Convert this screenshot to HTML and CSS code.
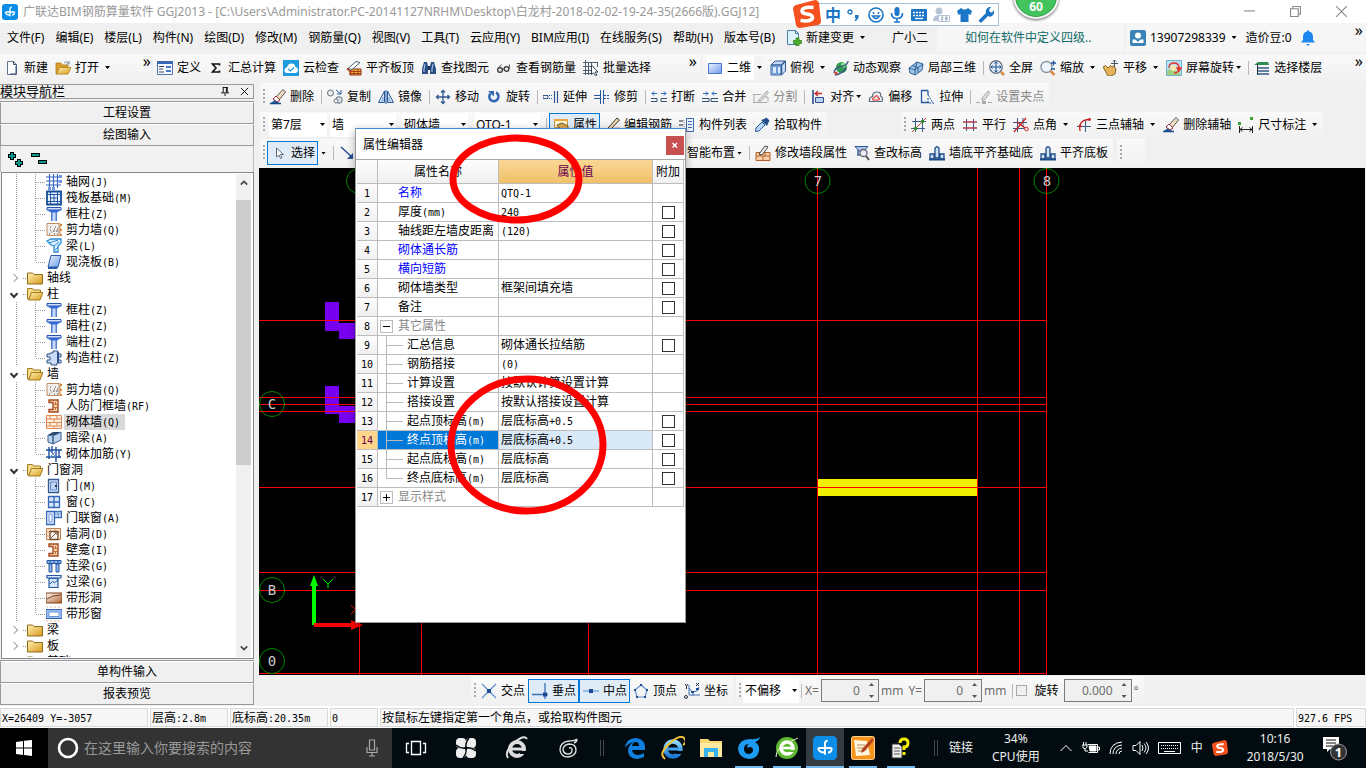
FILE: index.html
```html
<!DOCTYPE html>
<html lang="zh-CN">
<head>
<meta charset="utf-8">
<title>广联达BIM钢筋算量软件 GGJ2013</title>
<link rel="stylesheet" href="styles.css">
</head>
<body>
<svg class="defs" aria-hidden="true">
<defs>
<linearGradient id="g-fold" x1="0" y1="0" x2="1" y2="1"><stop offset="0" stop-color="#fff3b0"/><stop offset="1" stop-color="#d99a1c"/></linearGradient>
<linearGradient id="g-blue" x1="0" y1="0" x2="1" y2="1"><stop offset="0" stop-color="#eaf2ff"/><stop offset="1" stop-color="#6f9be8"/></linearGradient>
<linearGradient id="g-col" x1="0" y1="0" x2="1" y2="0"><stop offset="0" stop-color="#2f62cc"/><stop offset=".5" stop-color="#e6f0ff"/><stop offset="1" stop-color="#3468d0"/></linearGradient>
<linearGradient id="g-brown" x1="0" y1="0" x2="1" y2="1"><stop offset="0" stop-color="#fff"/><stop offset="1" stop-color="#b5602a"/></linearGradient>
<linearGradient id="g-ie" x1="0" y1="0" x2="0" y2="1"><stop offset="0" stop-color="#8fd8ff"/><stop offset="1" stop-color="#1c78d4"/></linearGradient>
<symbol id="i-logo" viewBox="0 0 16 16"><rect width="16" height="16" rx="3" fill="#0b8de8"/><path d="M8 12.500V5q0-1.800 1.800-1.800M3.500 8h9M3.500 8q0 3 4.500 3M12.500 8q0 3-2.500 3" fill="none" stroke="#fff" stroke-width="1.300"/></symbol>
<symbol id="i-new" viewBox="0 0 16 16"><path d="M3.500 1.500h6l3 3v10h-9z" fill="#fff" stroke="#5d7590"/><path d="M9.500 1.500v3h3M12 6v8H6" fill="none" stroke="#2d4a6b"/></symbol>
<symbol id="i-open" viewBox="0 0 16 16"><path d="M1 3h5l1 2h6v3H5l-3 6H1z" fill="#d9a02b" stroke="#b17c17" stroke-width=".8"/><path d="M4.500 7.500H16L13 14H1.500z" fill="url(#g-fold)" stroke="#b17c17" stroke-width=".8"/><path d="M9 3q3-3 5 1m0-3v3h-3" fill="none" stroke="#7a8ea6"/></symbol>
<symbol id="i-define" viewBox="0 0 16 16"><path d="M.5 1.500h15v13H.5z" fill="#f4f8ff" stroke="#5572a6"/><path d="M0 1h16v3H0z" fill="#3b68b5"/><path d="M2 6.500h5M2 9h4M2 12h5" stroke="#445"/><path d="M9 6h5v2H9zm0 4h5v2H9z" fill="#4b78c8"/></symbol>
<symbol id="i-sum" viewBox="0 0 16 16"><path d="M11.500 5.500V4H4.500L8 8l-3.500 4h7v-1.500" fill="none" stroke="#111" stroke-width="1.600"/></symbol>
<symbol id="i-cloud" viewBox="0 0 16 16"><path d="M0 0h16v16H0z" fill="#1e9be0"/><path d="M4 13q-3-.5-2.500-3T4 7.300Q5 3.500 8.500 3.500T12.500 7Q15 7.500 15 10t-3 3z" fill="#fff"/><path d="M5 9l2.500 2L11 7.500" fill="none" stroke="#1e9be0" stroke-width="1.300"/></symbol>
<symbol id="i-house" viewBox="0 0 16 16"><path d="M7 9h8v6H4v-4z" fill="#f4b63e" stroke="#8c2f12"/><path d="M4 11.500h11M4 13.500h11M8 10v5M12 9v6" stroke="#a33d18"/><path d="M2 8.500L10 1.500l4 1L6 9.500z" fill="#fff" stroke="#4c5c74"/><path d="M1 8.500l3.500 3V15" fill="none" stroke="#b44a22" stroke-width="1.800"/></symbol>
<symbol id="i-bino" viewBox="0 0 16 16"><path d="M3 2h3l1 4v8H1V9zM13 2h-3L9 6v8h6V9z" fill="#2c4f85"/><path d="M7 6h2v4H7z" fill="#17305a"/><path d="M4 4L3 9v3M12 4l-1 5v3" stroke="#b8d0f2" fill="none"/></symbol>
<symbol id="i-glass" viewBox="0 0 16 16"><circle cx="4" cy="10" r="2.400" fill="#dfe5ec" stroke="#333" stroke-width="1.200"/><circle cx="10.500" cy="9" r="2.400" fill="#dfe5ec" stroke="#333" stroke-width="1.200"/><path d="M6.500 9.500L8.500 9M2.500 8l3-3.500M13 9l.5-4.500" fill="none" stroke="#444"/></symbol>
<symbol id="i-batch" viewBox="0 0 16 16"><path d="M2.500 0v15M5.500 2v13M8.500 2v3M14.500 2v5M0 2.500h15M0 6.500h8M0 10.500h8M0 13.500h9" stroke="#53606e" fill="none"/><path d="M8.500 5l6.500 7h-3l2 3-1.500.8-2-3-2 1.700z" fill="#fff" stroke="#345"/></symbol>
<symbol id="i-rect" viewBox="0 0 16 16"><path d="M1.500 3.500h13v10h-13z" fill="url(#g-blue)" stroke="#4b78c8"/></symbol>
<symbol id="i-cube" viewBox="0 0 16 16"><path d="M1 5l4-4h10.500v10l-4 4H1z" fill="#c7dbf7" stroke="#31588f"/><path d="M1 5h10.500v10M11.500 5l4-4" fill="none" stroke="#31588f" stroke-width="1.400"/><path d="M1.500 5.500h9.500v9H1.500z" fill="#6d9bd8"/><path d="M3 7h3v6H3zM8 7h2v6H8z" fill="#dcebff"/></symbol>
<symbol id="i-orbit" viewBox="0 0 16 16"><circle cx="8.500" cy="7.500" r="5.500" fill="#2e9e4f"/><circle cx="10.500" cy="5" r="2.500" fill="#8be39c"/><path d="M1 13Q1 8 8 6.500T15 1M2 15q7-1 11-7" fill="none" stroke="#3e5c80" stroke-width="1.400"/><circle cx="3" cy="13" r="1.600" fill="#d43"/></symbol>
<symbol id="i-part3" viewBox="0 0 16 16"><path d="M1 8l8-6 6 2-1 6-7 5-5-2z" fill="#9ec5ec" stroke="#326391"/><path d="M1 8l6 2v5M7 10l8-6M4 5.500l6 2v5M9 2L7 10" fill="none" stroke="#326391"/></symbol>
<symbol id="i-full" viewBox="0 0 16 16"><circle cx="7" cy="7" r="6.200" fill="#e3edf8" stroke="#6d7886" stroke-width="1.400"/><path d="M12 12l3 3" stroke="#d78b45" stroke-width="2.500"/><path d="M7 2v10M2 7h10M5.500 3.500L7 2l1.500 1.500M5.500 10.500L7 12l1.500-1.500M3.500 5.500L2 7l1.500 1.500M10.500 5.500L12 7l-1.500 1.500" fill="none" stroke="#1d4e8e"/></symbol>
<symbol id="i-zoom" viewBox="0 0 16 16"><circle cx="6.500" cy="7" r="5.500" fill="#eef4fb" stroke="#8793a0" stroke-width="1.400"/><path d="M10.500 11l4 4" stroke="#d78b45" stroke-width="2.500"/><path d="M11 3h5M13.500 .5v5M11 9h4" stroke="#1f5597" stroke-width="1.300"/></symbol>
<symbol id="i-hand" viewBox="0 0 16 16"><path d="M0 7l2.500-1.500L5 8l1-1 1.500-1.500L9 7l2-1 2 3-1 5-4 2H5z" fill="#e5b35b" stroke="#8b6828"/><path d="M11.500 0v7M8 3.500h7M10 1.500L11.500 0 13 1.500" fill="none" stroke="#47515d"/></symbol>
<symbol id="i-rotscr" viewBox="0 0 16 16"><path d="M.5.5h15v15H.5z" fill="#b8e2f4" stroke="#6fb3d3"/><path d="M1 11l5-3 9 6v1H1z" fill="#9fd07c"/><circle cx="7.500" cy="8" r="3" fill="#f7e7b0"/><path d="M3 8q0-5 5-5t5 5-5 5M11 8h4l-2 3z" fill="none" stroke="#e2322b" stroke-width="1.400"/></symbol>
<symbol id="i-floor" viewBox="0 0 16 16"><path d="M0 5l4-3h10l1 3z" fill="#2e8c55"/><path d="M3 8h12M3 11h12M3 14h12" stroke="#335c88" stroke-width="1.500"/><path d="M3.500 4v11" stroke="#234"/></symbol>
<symbol id="i-brush" viewBox="0 0 16 16"><path d="M1 14h8l-3-4z" fill="#1c5fa8"/><path d="M0 14.500h11" stroke="#164a87" stroke-width="1.500"/><path d="M6 8L13 .5 15.500 3 9 11z" fill="#f4dcc0" stroke="#565656"/><path d="M3 10l3-3 4 4-3 2z" fill="#fff" stroke="#8a2738"/></symbol>
<symbol id="i-copy" viewBox="0 0 16 16"><circle cx="3.500" cy="4" r="3" fill="#eee" stroke="#64707e"/><circle cx="12" cy="11" r="3.300" fill="#d8dee6" stroke="#64707e"/><circle cx="9" cy="12" r="2" fill="#fff" stroke="#64707e"/><path d="M9 1l5 4m0-4v4h-4" fill="none" stroke="#2c5f9e"/></symbol>
<symbol id="i-mirror" viewBox="0 0 16 16"><path d="M6.500 2v11.500h-6zM9.500 2v11.500h6z" fill="#dfeafa" stroke="#24559b"/><path d="M8 1v14" stroke="#24559b"/><path d="M5 8v4H3M11 8v4h2" fill="none" stroke="#6c97d0"/></symbol>
<symbol id="i-move" viewBox="0 0 16 16"><path d="M8 1.500v13M1.500 8h13M6 3.500l2-2 2 2M6 12.500l2 2 2-2M3.500 6l-2 2 2 2M12.500 6l2 2-2 2" fill="none" stroke="#31588f" stroke-width="1.300"/></symbol>
<symbol id="i-rot" viewBox="0 0 16 16"><path d="M10 3.500a4.600 4.600 0 1 1-5.500 1" fill="none" stroke="#3469b8" stroke-width="2.600"/><path d="M2 2h6v5.500z" fill="#3469b8"/></symbol>
<symbol id="i-extend" viewBox="0 0 16 16"><path d="M0 6.500h5v3H0z" fill="none" stroke="#2d588f"/><path d="M6 6.500h4M6 9.500h4" stroke="#2d588f" stroke-dasharray="1 1"/><path d="M11.500 2v12M14.500 2v12" stroke="#2d588f" stroke-width="1.200"/></symbol>
<symbol id="i-trim" viewBox="0 0 16 16"><path d="M6.500 1v14M9.500 1v14" stroke="#24559b"/><path d="M0 6.500h6M0 9.500h6" stroke="#24559b"/><path d="M10 6.500h5M10 9.500h5" stroke="#24559b" stroke-dasharray="2 1"/></symbol>
<symbol id="i-break" viewBox="0 0 16 16"><path d="M1 4.500h5M10 4.500h5M3 2.500l-2 2 2 2M13 2.500l2 2-2 2" fill="none" stroke="#2765ba"/><path d="M0 9.500h6v3H0M16 9.500h-6v3h6" fill="none" stroke="#34516f"/></symbol>
<symbol id="i-join" viewBox="0 0 16 16"><path d="M1 4.500h5M10 4.500h5M4 2.500l2 2-2 2M12 2.500l-2 2 2 2" fill="none" stroke="#2765ba"/><path d="M0 9.500h7v3H0M16 9.500H9v3h7" fill="none" stroke="#34516f"/></symbol>
<symbol id="i-split" viewBox="0 0 16 16"><path d="M0 5.500h8M0 13.500h14M1 6v8M10 8h5v5" fill="none" stroke="#aaa"/><path d="M5 12l9-10 1.500 1.500L8 12z" fill="#ddd" stroke="#aaa"/></symbol>
<symbol id="i-align" viewBox="0 0 16 16"><path d="M3 1v14" stroke="#2a4e86" stroke-width="1.600"/><path d="M5.500 8.500h8v5h-8z" fill="#bcd2f1" stroke="#2a4e86"/><path d="M12 4.500H5M8 2L5 4.500 8 7" stroke="#c62828" fill="none" stroke-width="1.300"/></symbol>
<symbol id="i-offset" viewBox="0 0 16 16"><path d="M1.500 12.500q-1-4 3-5 0-4.500 4.500-4.500t3.500 4q3 1.500 1.500 5.500z" fill="#eee" stroke="#5b6c80" stroke-width="1.200"/><path d="M5 11q-1-2 2-3 2-3 3.500 1 2 1 0 2z" fill="none" stroke="#d33" stroke-width="1.200"/></symbol>
<symbol id="i-stretch" viewBox="0 0 16 16"><path d="M9 1.500H2.500v12H10M9 1.500V6" fill="none" stroke="#2859a0" stroke-width="1.300"/><path d="M9 6l5 8M9 9v5h6" fill="none" stroke="#2859a0" stroke-dasharray="2 1"/></symbol>
<symbol id="i-pen" viewBox="0 0 16 16"><path d="M0 13.500h4M12 13.500h4" stroke="#aaa"/><path d="M6 9l6-7 2 1.500-5 7-3 1z" fill="#ddd" stroke="#aaa"/><path d="M6 12h4v3H6z" fill="#aaa"/></symbol>
<symbol id="i-prop" viewBox="0 0 16 16"><path d="M1.500 2.500h13v8h-13z" fill="#fff6d8" stroke="#c69141"/><path d="M1 2h14v2H1z" fill="#f0a33a"/><path d="M4 8l5-2 6 3v4l-5 2-3-3z" fill="#d8a551" stroke="#7c5a23"/><path d="M0 14l7-3" stroke="#446"/></symbol>
<symbol id="i-pencil" viewBox="0 0 16 16"><path d="M0 13.500h8l3-2h5" fill="none" stroke="#8a2f1c" stroke-width="1.500"/><path d="M4 11L13 1l2.500 2L7 12z" fill="#f1d5ac" stroke="#333"/></symbol>
<symbol id="i-list" viewBox="0 0 16 16"><path d="M7.500 1.500h7v13h-7z" fill="#eaf2ff" stroke="#3f68ab"/><path d="M9 4h4v1H9zm0 3h4v1H9zm0 3h4v1H9z" fill="#3f68ab"/><path d="M0 3h4v2H0zm0 4h4v2H0z" fill="#889"/><path d="M5 3v9" stroke="#889" stroke-dasharray="1 1"/></symbol>
<symbol id="i-pick" viewBox="0 0 16 16"><path d="M1.500 14.500l.5-3.500 6-6 3 3-6 6z" fill="#b9d6f6" stroke="#315b92"/><path d="M7 3l6 6 1-2.500 1.500-3-3-3L10 2z" fill="#214f8c"/></symbol>
<symbol id="i-axis2" viewBox="0 0 16 16"><path d="M4.500 1v14M11.500 1v14M1 4.500h14M0 11.500h14" stroke="#3b5a8c"/><path d="M1 15L15 1" stroke="#c33"/><circle cx="4.500" cy="11.500" r="1.700" fill="#2a8f2a"/><circle cx="11.500" cy="4.500" r="1.700" fill="#2a8f2a"/></symbol>
<symbol id="i-axisp" viewBox="0 0 16 16"><path d="M4.500 2v12M11.500 2v12" stroke="#3b5a8c"/><path d="M1 5h14M1 11h14" stroke="#b33a4a" stroke-width="1.300"/></symbol>
<symbol id="i-axisa" viewBox="0 0 16 16"><path d="M4.500 1v14M0 5.500h14M0 11.500h11M10 1v9" stroke="#3b5a8c"/><path d="M1 15L13 1M4 5l8 6" stroke="#c22" stroke-width="1.300"/><circle cx="13.500" cy="12" r="1.800" fill="#fff" stroke="#c22"/></symbol>
<symbol id="i-axis3" viewBox="0 0 16 16"><path d="M9.500 3v12M1 9.500h14" stroke="#3b5a8c"/><path d="M4 14Q2 3 13 2.500" fill="none" stroke="#c22" stroke-width="1.300"/><circle cx="13.500" cy="2.500" r="1.400" fill="#c22"/><circle cx="4" cy="9" r="1.400" fill="#c22"/></symbol>
<symbol id="i-dim" viewBox="0 0 16 16"><path d="M1.500 9v7M14.500 9v7M2 12.500h12M4.500 10.500L2 12.500l2.500 2M11.500 10.500l2.500 2-2.500 2" fill="none" stroke="#222"/><path d="M0 5h3v3H0zM12 0h3v3h-3z" fill="#35a535"/></symbol>
<symbol id="i-cursor" viewBox="0 0 16 16"><path d="M5.500 3v9L8 10l1.500 3.500 1.500-.8L9.500 9.500h3z" fill="#fff" stroke="#5e6a7a"/></symbol>
<symbol id="i-line" viewBox="0 0 16 16"><path d="M2 2l12 11" stroke="#24508f" stroke-width="1.500"/><path d="M14 8v6H8z" fill="#24508f"/></symbol>
<symbol id="i-wallp" viewBox="0 0 16 16"><path d="M1 7.500h14v8H1z" fill="#f9cfa8" stroke="#b3602c"/><path d="M1 11h14M5 7v4M10 7v4M8 11v4" stroke="#b3602c"/><path d="M4 9l6-8 3 1-6 8z" fill="#eee" stroke="#444"/></symbol>
<symbol id="i-height" viewBox="0 0 16 16"><path d="M1 1.500h13L10 6H5z" fill="#a9c5ea" stroke="#335b93"/><path d="M4 5v5h3" fill="none" stroke="#335b93" stroke-width="1.500"/><circle cx="9.500" cy="8" r="3.500" fill="#eef" stroke="#667" stroke-width="1.300"/><path d="M12 11l3 4" stroke="#555" stroke-width="2"/></symbol>
<symbol id="i-base" viewBox="0 0 16 16"><path d="M6 3l2-1.500L10 3v10H6zM1 9h4v5H1zM11 9h4v5h-4z" fill="#cce0f7" stroke="#214c86" stroke-width="1.300"/><path d="M0 14.500h16" stroke="#214c86" stroke-width="2"/></symbol>
<symbol id="i-grid" viewBox="0 0 16 16"><path d="M3.500 0v14M7.500 0v14M11.500 0v14M0 3h15M0 7h15M0 11h15" stroke="#3565c0" stroke-width="1.200"/><path d="M13 1h3v3h-3zm0 5h3v3h-3zM2 13h3v3H2zm4 0h3v3H6z" fill="#6d97df"/></symbol>
<symbol id="i-raft" viewBox="0 0 16 16"><path d="M1 1.500h14v13H1z" fill="#eaf2ff" stroke="#164c94" stroke-width="1.800"/><path d="M4.500 1v14M11.500 1v14M1 4.500h14M1 11.500h14M8 4v8M4 8h8" stroke="#1d57a5"/></symbol>
<symbol id="i-col" viewBox="0 0 16 16"><path d="M1 1.500h14V4H1z" fill="#cfe0fb" stroke="#2455ac"/><path d="M5 5h6v10H5z" fill="url(#g-col)"/><path d="M1 4l4 2.500h6L15 4" fill="#3468d0"/></symbol>
<symbol id="i-shear" viewBox="0 0 16 16"><path d="M1 1.500h12v12H1z" fill="#f2efeb" stroke="#c08a62"/><path d="M4 5h1m4 0h1m-6 3h1m3-1h1M5 10h1m2 2h1m1-3h2M3 12h1m3-3h2m2-2h1m-1 5h1" stroke="#555"/><path d="M14 1v13" stroke="#c08a62"/><path d="M15 2v2m0 3v2m0 3v2" stroke="#e68a29" stroke-width="2"/></symbol>
<symbol id="i-beam" viewBox="0 0 16 16"><path d="M1 3l4-2h10v4l-3 3v6H8V8L5 7z" fill="#dff0ff" stroke="#2b8dd6" stroke-width="1.300"/><path d="M3 5l9-3M8 8l5-4M9 12l3-3" stroke="#2b8dd6"/></symbol>
<symbol id="i-slab" viewBox="0 0 16 16"><path d="M5 1.500h10L12 13H2z" fill="url(#g-blue)" stroke="#2859a8"/><path d="M2 13v2h9l1-2" fill="#2859a8"/></symbol>
<symbol id="i-fold" viewBox="0 0 16 16"><path d="M.5 3h5l1.500 1.500h8.500V14H.5z" fill="url(#g-fold)" stroke="#8e6a1d"/></symbol>
<symbol id="i-foldo" viewBox="0 0 16 16"><path d="M.5 2.500h5l1 1.500h7v3H5l-3 6H.5z" fill="#f6dc86" stroke="#a37a22"/><path d="M4.500 6.500H16L13 14H1.500z" fill="url(#g-fold)" stroke="#a37a22"/></symbol>
<symbol id="i-ccol" viewBox="0 0 16 16"><path d="M4 3h3V1h5v3h3v3h-3v3h3v3h-4v2H5v-2H1v-3h3V7H1V4h3z" fill="#c9dbf5" stroke="#2d5289"/><path d="M12 2v11" stroke="#2d5289" stroke-width="2"/></symbol>
<symbol id="i-door2" viewBox="0 0 16 16"><path d="M3 2h9v12H3v-2.500h4v-7H3z" fill="#f9d5b4" stroke="#a3491d" stroke-width="1.400"/><path d="M7 6.500h5M7 9.500h5M9.500 4v3M9.500 9v3" stroke="#c46a34"/></symbol>
<symbol id="i-brick" viewBox="0 0 16 16"><path d="M.5 1.500h15v13H.5z" fill="#fdeede" stroke="#dd8a55"/><path d="M0 5h16M0 8.500h16M0 12h16M4 1v4m7-4v4M8 5v3M4 8v4m7-4v4M8 12v3" stroke="#dd8a55"/></symbol>
<symbol id="i-hbeam" viewBox="0 0 16 16"><path d="M2 5l5-3h8l-4 3z" fill="#27466f"/><path d="M2 5l5 1v8l-5-2zM7 6l8-4v8l-8 4z" fill="#bcd2ef" stroke="#38618f"/></symbol>
<symbol id="i-rebar" viewBox="0 0 16 16"><path d="M3 1v12M10 1v15M0 4h16M0 11h15M13 4v8M6 0v7" stroke="#1d4f9f" stroke-width="1.400"/><path d="M4 5l6 6M4 11l6-6" stroke="#6b94d5"/></symbol>
<symbol id="i-door" viewBox="0 0 16 16"><path d="M2.500 1.500h10v13h-10z" fill="#dbe8fb" stroke="#31588f" stroke-width="1.300"/><path d="M4.500 4h6v8h-6z" fill="#bcd4f7" stroke="#5c87c5"/><path d="M9 7h2v2H9z" fill="#333"/></symbol>
<symbol id="i-win" viewBox="0 0 16 16"><path d="M2.500 2.500h11v11h-11z" fill="#d5e6fd" stroke="#3467b8" stroke-width="1.300"/><path d="M8 2v12M2 8h12" stroke="#3467b8" stroke-width="1.300"/></symbol>
<symbol id="i-dwin" viewBox="0 0 16 16"><path d="M.5 1.500h8v13h-8zM8.500 1.500h7v6h-7z" fill="#dbe8fb" stroke="#3467b8" stroke-width="1.300"/><path d="M3 4h3v8H3zM12 1v6M9 4h6" fill="#fff" stroke="#6d97d8"/></symbol>
<symbol id="i-hole" viewBox="0 0 16 16"><path d="M.5 2.500h14v11H.5z" fill="#fdeede" stroke="#c07a4a"/><path d="M0 6h15M0 10h4M4 2v4M9 2v4" stroke="#d99b6e"/><path d="M4 5.500h8v8H4z" fill="#fff" stroke="#76471f" stroke-width="1.300"/><path d="M4 13l6-6M8 6h3v3" fill="none" stroke="#76471f"/></symbol>
<symbol id="i-cbeam" viewBox="0 0 16 16"><path d="M1 2.500h14v3H1zM3 6h3v8H3zM10 6h3v8h-3z" fill="#8db4ee" stroke="#23579f"/><path d="M4 2v3M8 2v3M12 2v3" stroke="#23579f"/></symbol>
<symbol id="i-lintel" viewBox="0 0 16 16"><path d="M1 1.500h14V4H1zM3 4.500h9v9H3z" fill="#d7e6fc" stroke="#23579f" stroke-width="1.200"/><path d="M4 10q3-4 4-2t4-3" fill="none" stroke="#23579f"/></symbol>
<symbol id="i-sgap" viewBox="0 0 16 16"><path d="M0 3h16v10H0z" fill="url(#g-brown)" stroke="#7b4018"/><path d="M1 9q5-4 14-4" stroke="#7b4018" fill="none"/></symbol>
<symbol id="i-swin" viewBox="0 0 16 16"><path d="M0 3.500h16v9H0z" fill="#9cbbee" stroke="#3467b8"/><path d="M3 6h10v4.500H3z" fill="#fff" stroke="#6d97d8"/><path d="M0 1h16M0 15h16" stroke="#f0b8a0" stroke-dasharray="2 2"/></symbol>
<symbol id="i-note" viewBox="0 0 16 16"><path d="M1.500.5h8l3 3v11h-11z" fill="#dff2fb" stroke="#46829e"/><path d="M9.500.5v3h3" fill="none" stroke="#46829e"/><path d="M10 8h3v2.500h2.500v3H13V16h-3v-2.500H7.500v-3H10z" fill="#4caf2c" stroke="#2b7a14" stroke-width=".7"/></symbol>
<symbol id="i-user" viewBox="0 0 16 16"><rect width="16" height="16" rx="2" fill="#3a83b8"/><circle cx="8" cy="5.500" r="3" fill="#fff"/><path d="M2.500 13V9.500h3L8 12l2.500-2.500h3V13z" fill="#fff"/></symbol>
<symbol id="i-bell" viewBox="0 0 16 16"><path d="M8 0q1 0 1 1.500 4 .5 4 5.500v3l2 2.500H1L3 10V7q0-5 4-5.500Q7 0 8 0zM6 14h4l-2 2z" fill="#1e88f0"/></symbol>
<symbol id="i-cross" viewBox="0 0 16 16"><path d="M1 1l14 14M15 1L1 15" stroke="#5e8fd0" stroke-width="1.200"/><path d="M6 6h4v4H6z" fill="#1d4a92"/></symbol>
<symbol id="i-perp" viewBox="0 0 16 16"><path d="M0 11.500h16M13 0v16" stroke="#3c6fb5" stroke-width="1.300"/><path d="M11 9.500h4v4h-4z" fill="#1d4a92"/></symbol>
<symbol id="i-mid" viewBox="0 0 16 16"><path d="M0 8h16" stroke="#6ea1dd" stroke-width="1.300"/><path d="M6 6h4v4H6z" fill="#1d4a92"/></symbol>
<symbol id="i-vert" viewBox="0 0 16 16"><path d="M8 2l6 5-2 7H4L2 7z" fill="none" stroke="#5e8fd0" stroke-width="1.200"/><path d="M7 1h2v2H7zM1 6h2v2H1zm12 0h2v2h-2zM3 13h2v2H3zm8 0h2v2h-2z" fill="#1d4a92"/></symbol>
<symbol id="i-coord" viewBox="0 0 16 16"><path d="M5 2v10h11M5 5l3 4 5-1 2-4M9 9v4" fill="none" stroke="#3c6fb5"/><path d="M1 1l1.500 2L4 1M2.500 3v3M12 0l3 3m0-3l-3 3" fill="none" stroke="#234"/><circle cx="2" cy="14" r="1.500" fill="none" stroke="#234"/><path d="M7 8h3v2H7zm5-3h3v2h-3z" fill="#1d4a92"/></symbol>
<symbol id="i-sogou" viewBox="0 0 28 28"><path d="M3 5l19-5q3 0 4 3l2 18q0 3-3 4L7 28q-3 0-4-3L0 9q0-3 3-4z" fill="#f4511e"/><path d="M20.500 7.500Q10 6.500 9 10.500q0 3 5 3.500 6 .7 5.500 4Q18 22 7.500 20.500" fill="none" stroke="#fff" stroke-width="3.600"/></symbol>
</defs>
</svg>

<div class="app">
<header class="title">
  <svg class="ic"><use href="#i-logo"/></svg>
  <h1>广联达BIM钢筋算量软件 GGJ2013 - [C:\Users\Administrator.PC-20141127NRHM\Desktop\白龙村-2018-02-02-19-24-35(2666版).GGJ12]</h1>
  <div class="winctl">
    <button type="button" aria-label="最小化"><svg viewBox="0 0 10 10"><path d="M0 4.500h10"/></svg></button>
    <button type="button" aria-label="还原"><svg viewBox="0 0 10 10"><path d="M.5 2.500h7v7h-7zM2.500 2.500v-2h7v7h-2"/></svg></button>
    <button type="button" aria-label="关闭"><svg viewBox="0 0 10 10"><path d="M0 0l10 10M10 0L0 10"/></svg></button>
  </div>
</header>

<nav class="menubar">
  <div class="menus">
    <button type="button">文件(F)</button><button type="button">编辑(E)</button><button type="button">楼层(L)</button><button type="button">构件(N)</button><button type="button">绘图(D)</button><button type="button">修改(M)</button><button type="button">钢筋量(Q)</button><button type="button">视图(V)</button><button type="button">工具(T)</button><button type="button">云应用(Y)</button><button type="button">BIM应用(I)</button><button type="button">在线服务(S)</button><button type="button">帮助(H)</button><button type="button">版本号(B)</button>
    <button type="button" class="tool"><svg class="ic"><use href="#i-note"/></svg>新建变更<i class="arr"></i></button>
    <button type="button" class="nick">广小二</button>
  </div>
  <a class="tip" href="#tip">如何在软件中定义四级..</a>
  <div class="account">
    <button type="button" class="tool"><svg class="ic"><use href="#i-user"/></svg>13907298339<i class="arr"></i></button>
    <span>造价豆:0</span>
    <svg class="ic"><use href="#i-bell"/></svg>
    <span class="more">»</span>
  </div>
</nav>

<div class="topbar">
  <div class="strip s-file">
    <button type="button" class="tool"><svg class="ic"><use href="#i-new"/></svg>新建</button>
    <button type="button" class="tool"><svg class="ic"><use href="#i-open"/></svg>打开<i class="arr"></i></button>
    <span class="more">»</span>
  </div>
  <div class="strip s-main">
    <button type="button" class="tool"><svg class="ic"><use href="#i-define"/></svg>定义</button>
    <button type="button" class="tool"><svg class="ic"><use href="#i-sum"/></svg>汇总计算</button>
    <button type="button" class="tool"><svg class="ic"><use href="#i-cloud"/></svg>云检查</button>
    <button type="button" class="tool"><svg class="ic"><use href="#i-house"/></svg>平齐板顶</button>
    <button type="button" class="tool"><svg class="ic"><use href="#i-bino"/></svg>查找图元</button>
    <button type="button" class="tool"><svg class="ic"><use href="#i-glass"/></svg>查看钢筋量</button>
    <button type="button" class="tool"><svg class="ic"><use href="#i-batch"/></svg>批量选择</button>
    <span class="more">»</span>
  </div>
  <div class="strip s-view">
    <button type="button" class="tool white"><svg class="ic"><use href="#i-rect"/></svg>二维<i class="arr"></i></button>
    <button type="button" class="tool"><svg class="ic"><use href="#i-cube"/></svg>俯视<i class="arr"></i></button>
    <button type="button" class="tool"><svg class="ic"><use href="#i-orbit"/></svg>动态观察</button>
    <button type="button" class="tool"><svg class="ic"><use href="#i-part3"/></svg>局部三维</button>
    <i class="sep"></i>
    <button type="button" class="tool"><svg class="ic"><use href="#i-full"/></svg>全屏</button>
    <button type="button" class="tool"><svg class="ic"><use href="#i-zoom"/></svg>缩放<i class="arr"></i></button>
    <button type="button" class="tool"><svg class="ic"><use href="#i-hand"/></svg>平移<i class="arr"></i></button>
    <button type="button" class="tool"><svg class="ic"><use href="#i-rotscr"/></svg>屏幕旋转<i class="arr near"></i></button>
    <i class="sep"></i>
    <button type="button" class="tool"><svg class="ic"><use href="#i-floor"/></svg>选择楼层</button>
    <span class="more">»</span>
  </div>
</div>

<div class="work">
<aside class="side">
  <div class="side-head"><h2>模块导航栏</h2>
    <button type="button" aria-label="固定"><svg viewBox="0 0 10 10"><path d="M2.500 0v6M2 .5h5M6 0v6M7 0v6M0 6.500h9M4.500 7v3"/></svg></button>
    <button type="button" aria-label="关闭导航栏"><svg viewBox="0 0 10 10"><path d="M1 1l8 8M9 1L1 9"/></svg></button>
  </div>
  <button type="button" class="bar">工程设置</button>
  <button type="button" class="bar">绘图输入</button>
  <div class="expand">
    <svg viewBox="0 0 40 16"><path d="M4 0v8M0 4h8M11 7v8M7 11h8M23 3h9M30 10h9" stroke="#000" stroke-width="4" fill="none"/><path d="M4 1v6M1 4h6M11 8v6M8 11h6M24 3h7M31 10h7" stroke="#0b9a8d" stroke-width="2" fill="none"/></svg>
  </div>
  <div class="tree">
    <ul>
      <li class="leaf"><svg class="ic"><use href="#i-grid"/></svg><span>轴网<tt>(J)</tt></span></li>
      <li class="leaf"><svg class="ic"><use href="#i-raft"/></svg><span>筏板基础<tt>(M)</tt></span></li>
      <li class="leaf"><svg class="ic"><use href="#i-col"/></svg><span>框柱<tt>(Z)</tt></span></li>
      <li class="leaf"><svg class="ic"><use href="#i-shear"/></svg><span>剪力墙<tt>(Q)</tt></span></li>
      <li class="leaf"><svg class="ic"><use href="#i-beam"/></svg><span>梁<tt>(L)</tt></span></li>
      <li class="leaf last"><svg class="ic"><use href="#i-slab"/></svg><span>现浇板<tt>(B)</tt></span></li>
      <li class="dir"><i class="chev"></i><svg class="ic"><use href="#i-fold"/></svg><span>轴线</span></li>
      <li class="dir open"><i class="chev"></i><svg class="ic"><use href="#i-foldo"/></svg><span>柱</span></li>
      <li class="leaf"><svg class="ic"><use href="#i-col"/></svg><span>框柱<tt>(Z)</tt></span></li>
      <li class="leaf"><svg class="ic"><use href="#i-col"/></svg><span>暗柱<tt>(Z)</tt></span></li>
      <li class="leaf"><svg class="ic"><use href="#i-col"/></svg><span>端柱<tt>(Z)</tt></span></li>
      <li class="leaf last"><svg class="ic"><use href="#i-ccol"/></svg><span>构造柱<tt>(Z)</tt></span></li>
      <li class="dir open"><i class="chev"></i><svg class="ic"><use href="#i-foldo"/></svg><span>墙</span></li>
      <li class="leaf"><svg class="ic"><use href="#i-shear"/></svg><span>剪力墙<tt>(Q)</tt></span></li>
      <li class="leaf"><svg class="ic"><use href="#i-door2"/></svg><span>人防门框墙<tt>(RF)</tt></span></li>
      <li class="leaf sel"><svg class="ic"><use href="#i-brick"/></svg><span>砌体墙<tt>(Q)</tt></span></li>
      <li class="leaf"><svg class="ic"><use href="#i-hbeam"/></svg><span>暗梁<tt>(A)</tt></span></li>
      <li class="leaf last"><svg class="ic"><use href="#i-rebar"/></svg><span>砌体加筋<tt>(Y)</tt></span></li>
      <li class="dir open"><i class="chev"></i><svg class="ic"><use href="#i-foldo"/></svg><span>门窗洞</span></li>
      <li class="leaf"><svg class="ic"><use href="#i-door"/></svg><span>门<tt>(M)</tt></span></li>
      <li class="leaf"><svg class="ic"><use href="#i-win"/></svg><span>窗<tt>(C)</tt></span></li>
      <li class="leaf"><svg class="ic"><use href="#i-dwin"/></svg><span>门联窗<tt>(A)</tt></span></li>
      <li class="leaf"><svg class="ic"><use href="#i-hole"/></svg><span>墙洞<tt>(D)</tt></span></li>
      <li class="leaf"><svg class="ic"><use href="#i-door2"/></svg><span>壁龛<tt>(I)</tt></span></li>
      <li class="leaf"><svg class="ic"><use href="#i-cbeam"/></svg><span>连梁<tt>(G)</tt></span></li>
      <li class="leaf"><svg class="ic"><use href="#i-lintel"/></svg><span>过梁<tt>(G)</tt></span></li>
      <li class="leaf"><svg class="ic"><use href="#i-sgap"/></svg><span>带形洞</span></li>
      <li class="leaf last"><svg class="ic"><use href="#i-swin"/></svg><span>带形窗</span></li>
      <li class="dir"><i class="chev"></i><svg class="ic"><use href="#i-fold"/></svg><span>梁</span></li>
      <li class="dir"><i class="chev"></i><svg class="ic"><use href="#i-fold"/></svg><span>板</span></li>
      <li class="dir"><i class="chev"></i><svg class="ic"><use href="#i-fold"/></svg><span>基础</span></li>
    </ul>
    <div class="scroll"><svg viewBox="0 0 10 6"><path d="M1 5l4-4 4 4"/></svg><i class="thumb"></i><svg viewBox="0 0 10 6"><path d="M1 1l4 4 4-4"/></svg></div>
  </div>
  <button type="button" class="bar">单构件输入</button>
  <button type="button" class="bar">报表预览</button>
</aside>

<main class="stage">
  <div class="row r-edit">
    <div class="strip">
      <i class="grip"></i>
      <button type="button" class="tool"><svg class="ic"><use href="#i-brush"/></svg>删除</button><i class="sep"></i>
      <button type="button" class="tool"><svg class="ic"><use href="#i-copy"/></svg>复制</button>
      <button type="button" class="tool"><svg class="ic"><use href="#i-mirror"/></svg>镜像</button><i class="sep"></i>
      <button type="button" class="tool"><svg class="ic"><use href="#i-move"/></svg>移动</button>
      <button type="button" class="tool"><svg class="ic"><use href="#i-rot"/></svg>旋转</button><i class="sep"></i>
      <button type="button" class="tool"><svg class="ic"><use href="#i-extend"/></svg>延伸</button>
      <button type="button" class="tool"><svg class="ic"><use href="#i-trim"/></svg>修剪</button><i class="sep"></i>
      <button type="button" class="tool"><svg class="ic"><use href="#i-break"/></svg>打断</button>
      <button type="button" class="tool"><svg class="ic"><use href="#i-join"/></svg>合并</button>
      <button type="button" class="tool off" disabled><svg class="ic"><use href="#i-split"/></svg>分割</button><i class="sep"></i>
      <button type="button" class="tool"><svg class="ic"><use href="#i-align"/></svg>对齐<i class="arr near"></i></button>
      <button type="button" class="tool"><svg class="ic"><use href="#i-offset"/></svg>偏移</button>
      <button type="button" class="tool"><svg class="ic"><use href="#i-stretch"/></svg>拉伸</button><i class="sep"></i>
      <button type="button" class="tool off" disabled><svg class="ic"><use href="#i-pen"/></svg>设置夹点</button>
    </div>
  </div>
  <div class="row r-comp">
    <div class="strip">
      <i class="grip"></i>
      <span class="combo floor"><select aria-label="楼层"><option>第7层</option></select></span>
      <span class="combo"><select aria-label="构件大类"><option>墙</option></select></span>
      <span class="combo"><select aria-label="构件类型"><option>砌体墙</option></select></span>
      <span class="combo"><select aria-label="构件名称"><option>QTQ-1</option></select></span>
      <i class="sep"></i>
      <button type="button" class="tool on"><svg class="ic"><use href="#i-prop"/></svg>属性</button>
      <button type="button" class="tool"><svg class="ic"><use href="#i-pencil"/></svg>编辑钢筋</button>
      <button type="button" class="tool"><svg class="ic"><use href="#i-list"/></svg>构件列表</button>
      <button type="button" class="tool"><svg class="ic"><use href="#i-pick"/></svg>拾取构件</button>
    </div>
    <div class="strip s-axis">
      <i class="grip"></i>
      <button type="button" class="tool"><svg class="ic"><use href="#i-axis2"/></svg>两点</button>
      <button type="button" class="tool"><svg class="ic"><use href="#i-axisp"/></svg>平行</button>
      <button type="button" class="tool"><svg class="ic"><use href="#i-axisa"/></svg>点角<i class="arr"></i></button>
      <button type="button" class="tool"><svg class="ic"><use href="#i-axis3"/></svg>三点辅轴<i class="arr"></i></button>
      <button type="button" class="tool"><svg class="ic"><use href="#i-brush"/></svg>删除辅轴</button>
      <button type="button" class="tool"><svg class="ic"><use href="#i-dim"/></svg>尺寸标注<i class="arr"></i></button>
    </div>
  </div>
  <div class="row r-draw">
    <div class="strip s-select">
      <i class="grip"></i>
      <button type="button" class="tool on"><svg class="ic"><use href="#i-cursor"/></svg>选择</button>
      <i class="arr near"></i><i class="sep"></i>
      <button type="button" class="tool" aria-label="直线"><svg class="ic"><use href="#i-line"/></svg></button>
    </div>
    <div class="strip s-smart">
      <button type="button" class="tool">智能布置<i class="arr near"></i></button><i class="sep"></i>
      <button type="button" class="tool"><svg class="ic"><use href="#i-wallp"/></svg>修改墙段属性</button>
      <button type="button" class="tool"><svg class="ic"><use href="#i-height"/></svg>查改标高</button>
      <button type="button" class="tool"><svg class="ic"><use href="#i-base"/></svg>墙底平齐基础底</button>
      <button type="button" class="tool"><svg class="ic"><use href="#i-base"/></svg>平齐底板</button>
    </div>
    <div class="strip s-empty"><i class="grip"></i></div>
  </div>

  <svg class="canvas" role="img" aria-label="轴网平面图">
    <g transform="translate(-259 -168)">
      <g fill="#7800f0"><path d="M325 302h14v29h-14zM339 323h30v16h-30zM325 386h14v28h-14zM339 406h30v17h-30z"/></g>
      <path fill="#f0f000" d="M818 479h160v17H818z"/>
      <g stroke="#f00" fill="none" shape-rendering="crispEdges">
        <path d="M259 320.500h788M259 397.500h788M259 404.500h788M259 411.500h788M259 487.500h788M259 572.500h788M259 590.500h788M259 673.500h788"/>
        <path d="M359.500 168v507M421.500 168v507M588.500 168v507M817.500 168v507M977.500 168v507M1019.500 168v507M1046.500 168v507"/>
      </g>
      <g fill="none" stroke="#008a00"><circle cx="272" cy="404" r="12.500"/><circle cx="272" cy="590" r="12.500"/><circle cx="272" cy="661" r="12.500"/><circle cx="359" cy="181" r="12.500"/><circle cx="817.500" cy="181" r="12.500"/><circle cx="1046.500" cy="181" r="12.500"/></g>
      <g class="axis-name"><text x="272" y="409">C</text><text x="272" y="595">B</text><text x="272" y="666">0</text><text x="818" y="186">7</text><text x="1047" y="186">8</text></g>
      <path fill="#0f0" d="M312 625v-39h-2l4-11 4 11h-2v39z"/>
      <path fill="#f00" d="M314 623h37v-3l12 5-12 5v-3h-37z"/>
      <path d="M323 579l5 5 5-5M328 584v4" stroke="#0f0" fill="none"/><path d="M351 605l9 9M351 614l9-9" stroke="#f00" fill="none"/>
    </g>
  </svg>

  <div class="row r-snap">
    <div class="strip s-points">
      <i class="grip"></i>
      <button type="button" class="tool"><svg class="ic"><use href="#i-cross"/></svg>交点</button>
      <div class="pair"><button type="button" class="tool on"><svg class="ic"><use href="#i-perp"/></svg>垂点</button><button type="button" class="tool on"><svg class="ic"><use href="#i-mid"/></svg>中点</button></div>
      <button type="button" class="tool"><svg class="ic"><use href="#i-vert"/></svg>顶点</button>
      <button type="button" class="tool"><svg class="ic"><use href="#i-coord"/></svg>坐标</button>
    </div>
    <div class="strip s-offset">
      <i class="grip"></i>
      <span class="combo shift"><select aria-label="偏移方式"><option>不偏移</option></select></span>
      <i class="sep"></i>
      <label class="num"><span>X=</span><span class="spin"><input value="0"></span><span>mm</span></label>
      <label class="num"><span>Y=</span><span class="spin"><input value="0"></span><span>mm</span></label>
      <i class="sep"></i>
      <label class="rotate"><input type="checkbox" class="tick"><span>旋转</span></label>
      <label class="num"><span class="spin wide"><input value="0.000" aria-label="旋转角度"></span><span>°</span></label>
    </div>
  </div>
</main>

<section class="dialog" aria-label="属性编辑器">
  <header><h2>属性编辑器</h2><button type="button" aria-label="关闭"><svg viewBox="0 0 8 8"><path d="M1.500 2l4.500 4.500M6 2L1.500 6.500"/></svg></button></header>
  <table>
    <colgroup><col class="c-no"><col class="c-name"><col class="c-val"><col class="c-add"></colgroup>
    <thead><tr><th></th><th>属性名称</th><th class="hot">属性值</th><th>附加</th></tr></thead>
    <tbody>
      <tr><th><tt>1</tt></th><td class="k link">名称</td><td><tt>QTQ-1</tt></td><td></td></tr>
      <tr><th><tt>2</tt></th><td class="k">厚度<tt>(mm)</tt></td><td><tt>240</tt></td><td><input type="checkbox" class="tick" aria-label="附加 厚度"></td></tr>
      <tr><th><tt>3</tt></th><td class="k">轴线距左墙皮距离</td><td><tt>(120)</tt></td><td><input type="checkbox" class="tick" aria-label="附加 轴线距左墙皮距离"></td></tr>
      <tr><th><tt>4</tt></th><td class="k link">砌体通长筋</td><td></td><td><input type="checkbox" class="tick" aria-label="附加 砌体通长筋"></td></tr>
      <tr><th><tt>5</tt></th><td class="k link">横向短筋</td><td></td><td><input type="checkbox" class="tick" aria-label="附加 横向短筋"></td></tr>
      <tr><th><tt>6</tt></th><td class="k">砌体墙类型</td><td>框架间填充墙</td><td><input type="checkbox" class="tick" aria-label="附加 砌体墙类型"></td></tr>
      <tr><th><tt>7</tt></th><td class="k">备注</td><td></td><td><input type="checkbox" class="tick" aria-label="附加 备注"></td></tr>
      <tr><th><tt>8</tt></th><td class="k group"><button type="button" class="fold" aria-label="折叠"></button>其它属性</td><td></td><td></td></tr>
      <tr><th><tt>9</tt></th><td class="k sub">汇总信息</td><td>砌体通长拉结筋</td><td><input type="checkbox" class="tick" aria-label="附加 汇总信息"></td></tr>
      <tr><th><tt>10</tt></th><td class="k sub">钢筋搭接</td><td><tt>(0)</tt></td><td></td></tr>
      <tr><th><tt>11</tt></th><td class="k sub">计算设置</td><td>按默认计算设置计算</td><td></td></tr>
      <tr><th><tt>12</tt></th><td class="k sub">搭接设置</td><td>按默认搭接设置计算</td><td></td></tr>
      <tr><th><tt>13</tt></th><td class="k sub">起点顶标高<tt>(m)</tt></td><td>层底标高<tt>+0.5</tt></td><td><input type="checkbox" class="tick" aria-label="附加 起点顶标高"></td></tr>
      <tr class="cur"><th><tt>14</tt></th><td class="k sub">终点顶标高<tt>(m)</tt></td><td>层底标高<tt>+0.5</tt></td><td><input type="checkbox" class="tick" aria-label="附加 终点顶标高"></td></tr>
      <tr><th><tt>15</tt></th><td class="k sub">起点底标高<tt>(m)</tt></td><td>层底标高</td><td><input type="checkbox" class="tick" aria-label="附加 起点底标高"></td></tr>
      <tr><th><tt>16</tt></th><td class="k sub end">终点底标高<tt>(m)</tt></td><td>层底标高</td><td><input type="checkbox" class="tick" aria-label="附加 终点底标高"></td></tr>
      <tr><th><tt>17</tt></th><td class="k group"><button type="button" class="fold plus" aria-label="展开"></button>显示样式</td><td></td><td></td></tr>
    </tbody>
  </table>
  <svg class="marks" aria-hidden="true"><ellipse cx="160" cy="50" rx="63" ry="41"/><ellipse cx="171" cy="316" rx="76" ry="66"/></svg>
</section>
</div>

<footer class="status">
  <span class="w-xy"><tt>X=26409 Y=-3057</tt></span><span class="w-h">层高<tt>:2.8m</tt></span><span class="w-b">底标高<tt>:20.35m</tt></span><span class="w-n"><tt>0</tt></span><span class="w-msg">按鼠标左键指定第一个角点，或拾取构件图元</span><span class="w-fps"><tt>927.6 FPS</tt></span>
</footer>

<div class="taskbar">
  <button type="button" class="start" aria-label="开始"><svg width="16" height="16" viewBox="0 0 16 16"><path fill="#fff" d="M0 2l7-1v6.500H0zM8 .8L16 0v7.500H8zM0 8.500h7V15l-7-1zM8 8.500h8V16l-8-1z"/></svg></button>
  <label class="search"><svg width="22" height="22" viewBox="0 0 22 22"><circle cx="11" cy="11" r="9" fill="none" stroke="#fff" stroke-width="2.600"/></svg><input type="text" placeholder="在这里输入你要搜索的内容" aria-label="搜索"><svg width="12" height="18" viewBox="0 0 12 18"><path d="M3.500 1h5v10h-5zM1 8v5.500h10V8M6 14v3.500M3 17h6" fill="none" stroke="#aaa" stroke-width="1.200"/></svg></label>
  <div class="apps">
    <button type="button" aria-label="任务视图"><svg width="22" height="22" viewBox="0 0 22 22"><path d="M6.500 4.500h9v13h-9zM4 6.500H1.500v9H4M18 6.500h2.500v9H18" fill="none" stroke="#fff" stroke-width="1.300"/></svg></button>
    <button type="button" class="big" aria-label="浏览器"><svg width="24" height="24" viewBox="0 0 24 24"><rect x="2" y="2" width="10" height="10" rx="4" fill="#eee"/><rect x="12" y="2" width="10" height="10" rx="4" fill="#eee"/><rect x="2" y="12" width="10" height="10" rx="4" fill="#eee"/><rect x="12" y="12" width="10" height="10" rx="4" fill="#eee"/><path d="M2 9q5 4 10 3M15 2q-4 5-3 10M22 15q-5-4-10-3M9 22q4-5 3-10" fill="none" stroke="#020c10" stroke-width="1.400"/></svg></button>
    <button type="button" class="big" aria-label="网页"><svg width="24" height="24" viewBox="0 0 24 24"><circle cx="12" cy="13" r="7" fill="none" stroke="#ddd" stroke-width="4"/><path d="M6 13h14" stroke="#ddd" stroke-width="3"/><path d="M15 15h8v3h-8z" fill="#020c10"/><path d="M3 22Q-1 16 9 7T22 3" fill="none" stroke="#ddd" stroke-width="2"/></svg></button>
    <button type="button" class="big" aria-label="工具"><svg width="24" height="24" viewBox="0 0 24 24"><path d="M21 3q-2 2-8 2-9 1-9 9 1 7 8 7 8-1 8-7 0-6-7-6-6 1-6 6 1 4 5 4 4 0 4-4 0-3-3-2M21 3q0 3-3 4" fill="none" stroke="#ddd" stroke-width="1.400"/></svg></button>
    <i class="tsep"></i>
    <button type="button" class="mid" aria-label="Edge"><svg width="24" height="24" viewBox="0 0 24 24"><path d="M2 12Q3 2 13 2q10 1 9 12H9q1 5 6 5 3 0 6-2v4q-4 2-8 2-8-1-8-9 1-6 6-8-6 1-9 6zM9 10h7q0-4-3-4T9 10z" fill="#0f7fe0"/></svg></button>
    <button type="button" class="mid" aria-label="IE"><svg width="24" height="24" viewBox="0 0 24 24"><circle cx="12" cy="13" r="7.500" fill="none" stroke="url(#g-ie)" stroke-width="4.500"/><path d="M7 13h13" stroke="#42a5ee" stroke-width="3"/><path d="M15 15h8v3h-8z" fill="#020c10"/><path d="M4 23Q-3 18 8 8T23 2t-1 7" fill="none" stroke="#f5c436" stroke-width="2"/></svg></button>
    <button type="button" class="mid" aria-label="资源管理器"><svg width="22" height="22" viewBox="0 0 22 22"><path d="M0 2h8l2 2h12v16H0z" fill="#fbd774"/><path d="M0 6h22v14H0z" fill="#ffe9a0"/><path d="M4 20v-9h14v9h-4v-5H8v5z" fill="#38b2ea"/></svg></button>
    <button type="button" class="mid run" aria-label="广联达"><svg width="24" height="24" viewBox="0 0 24 24"><path d="M23 1q-1 4-5 5 5 3 4 9-2 8-10 8Q2 22 1 13 2 3 13 3q6 1 10-2zM12 8q-5 0-5 5t5 5q4-1 4-4t-3-3-2 2q-2-4 1-5z" fill="#1d9cf3" fill-rule="evenodd"/></svg></button>
    <button type="button" class="mid run" aria-label="360浏览器"><svg width="24" height="24" viewBox="0 0 24 24"><circle cx="12" cy="12" r="11" fill="#5fb832"/><circle cx="12" cy="12" r="6" fill="none" stroke="#fff" stroke-width="3.500"/><path d="M7 12h11" stroke="#fff" stroke-width="2.500"/><path d="M14 14h6v2h-6z" fill="#5fb832"/><path d="M1 21Q1 12 12 7t11-5" fill="none" stroke="#e7f6c8"/></svg></button>
    <button type="button" class="mid run active" aria-label="广联达BIM钢筋算量软件"><svg width="24" height="24"><use href="#i-logo"/></svg></button>
    <button type="button" class="mid run" aria-label="便笺"><svg width="24" height="24" viewBox="0 0 24 24"><rect x=".5" y=".5" width="23" height="23" rx="2" fill="#f7941d" stroke="#fbd08d"/><path d="M3 4l13 1 3 14-14 1z" fill="#fff7e0"/><path d="M6 9h8M6 12h7M7 15h6" stroke="#b98b5c"/><path d="M21 2L11 13l-1 4 4-2 9-11z" fill="#b5451c"/></svg></button>
    <button type="button" class="mid run" aria-label="帮助"><svg width="24" height="24" viewBox="0 0 24 24"><path d="M3 8h7l3 3v11H3z" fill="#eee" stroke="#333"/><path d="M5 12h6M5 15h6M5 18h6" stroke="#555"/><path d="M11 7q0-4 4-4t4 4-4 4v3M15 16v3" fill="none" stroke="#f5ee00" stroke-width="3"/></svg></button>
  </div>
  <i class="tsep"></i>
  <span class="links">链接</span>
  <div class="stack cpu"><span>34%</span><span>CPU使用</span></div>
  <div class="tray">
    <svg width="14" height="16" viewBox="0 0 14 16"><path d="M1.500 11L7 5.500l5.500 5.500"/></svg>
    <svg width="18" height="16" viewBox="0 0 18 16"><path d="M5.500 4.500h10v8h-9M16 7h1.500v3H16M0 5h5M1 5v3q3 2 4-1V5M3 8v3h3M1.500 2v3M4 2v3"/><path d="M7 6h7v5H8z" fill="#fff"/></svg>
    <svg width="14" height="16" viewBox="0 0 14 16"><path d="M1 14Q1 3 13 2M4 14q0-8 9-9M7 14q0-5 6-6M10 14q0-3 3-3"/></svg>
    <svg width="17" height="16" viewBox="0 0 17 16"><path d="M1 5.500h3l4-4v13l-4-4H1zM10 5q2 3 0 6M12 3.500q4 4 0 9M14 2q5 6 0 12"/></svg>
    <svg width="24" height="16" viewBox="0 0 24 16"><path d="M.5 2.500h22v11H.5zM6 11.500h11"/><path d="M3 5.500h18M3 8.500h18" stroke-dasharray="1 1"/></svg>
    <span>中</span>
    <svg class="sg" width="16" height="16"><use href="#i-sogou"/></svg>
  </div>
  <div class="stack clock"><span>10:16</span><span>2018/5/30</span></div>
  <button type="button" class="notice" aria-label="通知"><svg width="26" height="26" viewBox="0 0 26 26"><path d="M1 2h16v12H8l-3 3v-3H1z" fill="#fff"/><path d="M4 5h10M4 8h10M4 11h7" stroke="#111"/><circle cx="16.500" cy="17" r="8" fill="#333" stroke="#999"/><text x="16.500" y="22" text-anchor="middle">1</text></svg></button>
</div>

<div class="ime">
  <svg class="sbig" width="28" height="28"><use href="#i-sogou"/></svg>
  <b>中</b>
  <svg width="14" height="16" viewBox="0 0 14 16"><circle cx="3" cy="5" r="2" fill="none" stroke="#1b76c8" stroke-width="1.300"/><path d="M8 8h3.500v3L9 14H7.500L9 11H8z" fill="#1b76c8"/></svg>
  <svg width="16" height="16" viewBox="0 0 16 16"><circle cx="8" cy="8" r="7" fill="none" stroke="#1b76c8" stroke-width="1.600"/><path d="M5.500 5v2M10.500 5v2M4.500 9q3.500 5 7 0z" fill="none" stroke="#1b76c8" stroke-width="1.500"/></svg>
  <svg width="14" height="16" viewBox="0 0 14 16"><rect x="4.500" width="5" height="9" rx="2.500" fill="#1b76c8"/><path d="M1.500 6q0 5.500 5.500 5.500T12.500 6M7 11v4M4 15h6" fill="none" stroke="#1b76c8" stroke-width="1.600"/></svg>
  <svg width="16" height="16" viewBox="0 0 16 16"><rect y="2" width="16" height="12" rx="1" fill="#1b76c8"/><path d="M2 5.500h12M2 8.500h12" stroke="#fff" stroke-width="1.500" stroke-dasharray="2 1"/><path d="M4 11.500h8" stroke="#fff" stroke-width="1.300"/></svg>
  <svg width="17" height="16" viewBox="0 0 17 16"><circle cx="6" cy="4" r="3.500" fill="#b4c4d6"/><path d="M0 14q0-6 6-6t6 3v3z" fill="#b4c4d6"/><path d="M5.500 8.500h11v6h-11z" fill="#fff" stroke="#b4c4d6"/><path d="M8 10h2l-2 3h2M12 10h2v3h-2M12 11.500h2" fill="none" stroke="#8fa3ba"/></svg>
  <svg width="15" height="16" viewBox="0 0 15 16"><path d="M0 4l4-3q3.500 3 7 0l4 3-1.500 4-2-1v8h-8V7l-2 1z" fill="#1b76c8"/></svg>
  <svg width="16" height="16" viewBox="0 0 16 16"><path d="M1 13l7-7q-1-4 3-6h2l-2 3 1 2 2 .5L16 3q1 5-3 6.500-1.500.5-3-.5l-6.500 6.500Q.500 16 1 13z" fill="#1b76c8"/></svg>
</div>
<div class="ball">60</div>
</div>
</body>
</html>
```
FILE: styles.css
```css
* { box-sizing: border-box; }
html, body { height: 100%; margin: 0; }
body { overflow: hidden; background: #f0f0f0; color: #000; font: 12px/16px "Noto Sans", "Noto Sans CJK SC", sans-serif; }
h1, h2 { margin: 0; font-size: 12px; font-weight: 400; }
ul { margin: 0; padding: 0; list-style: none; }
button, input, select { margin: 0; padding: 0; border: 0; background: none; color: inherit; font: inherit; }
button { white-space: nowrap; }
tt { font: 10px/12px "DejaVu Sans Mono", monospace; }
.defs { position: absolute; width: 0; height: 0; }
.ic { flex: none; width: 16px; height: 16px; }

.app { position: relative; display: flex; flex-direction: column; height: 100vh; }

.title { display: flex; align-items: center; flex: 0 0 23px; padding-left: 2px; gap: 5px; background: #fff; color: #999; }
.title h1 { flex: 1; white-space: nowrap; overflow: hidden; }
.winctl { display: flex; gap: 35px; padding-right: 19px; }
.winctl button { display: flex; }
.winctl svg { width: 11px; height: 11px; fill: none; stroke: #888; }

.menubar { display: flex; flex: 0 0 29px; align-items: stretch; }
.menus { display: flex; flex: 0 0 937px; align-items: center; gap: 11px; padding-left: 7px; white-space: nowrap; }
.nick { margin-left: 15px; }
.tip { display: flex; flex: 0 0 187px; align-items: center; padding-left: 28px; background: #f6f6f6; color: #106b66; text-decoration: none; white-space: nowrap; }
.account { display: flex; flex: 1; align-items: center; gap: 8px; margin-left: 2px; padding: 0 3px 0 4px; background: #f6f6f6; }
.more { align-self: flex-start; margin-left: auto; font-size: 16px; line-height: 14px; }

.tool { display: inline-flex; align-items: center; gap: 4px; height: 24px; }
.arr { flex: none; width: 5px; height: 3px; margin: 0 1px 0 2px; background: #000; clip-path: polygon(0 0, 100% 0, 50% 100%); }
.arr.near { margin: 0 0 0 -2px; }
.sep { flex: none; width: 1px; height: 14px; margin-right: -2px; background: #b8b8b8; }
.grip { flex: none; width: 2px; height: 16px; background: repeating-linear-gradient(#aaa 0 2px, transparent 2px 4px); }
.off { color: #8a8a8a; }
.on { background: #dfecf8; box-shadow: inset 0 0 0 1px #0078d7; }
.white { background: linear-gradient(90deg, #fff 0 47px, #f4f4f4 47px); }

.strip { display: flex; align-items: center; gap: 7px; background: linear-gradient(#f9f9f9, #f1f1f1); white-space: nowrap; }
.topbar { display: flex; flex: 0 0 30px; gap: 2px; padding: 2px 0 1px; }
.topbar .strip { padding-left: 4px; }
.s-file { flex: 0 0 151px; }
.s-main { flex: 0 0 548px; padding-right: 4px; }
.s-view { flex: 1; padding-right: 3px; }

.work { position: relative; display: grid; flex: 1; min-height: 0; grid-template-columns: 255px minmax(0, 1fr); gap: 4px; }

.side { display: flex; flex-direction: column; min-height: 0; padding: 2px 1px 1px 0; }
.side-head { display: flex; flex: 0 0 15px; align-items: center; gap: 10px; margin-bottom: 3px; padding-right: 4px; border: 1px solid #999; border-left: 0; }
.side-head h2 { flex: 1; font-size: 13px; line-height: 13px; }
.side-head button { display: flex; }
.side-head svg { width: 9px; height: 9px; fill: none; stroke: #000; }
.bar { flex: 0 0 22px; border: 1px solid #999; border-top-color: #fff; box-shadow: 0 -1px #999; }
.expand { flex: 0 0 26px; padding: 6px 0 0 7px; border: 1px solid #bbb; border-width: 0 1px; background: #f2f2f2; }
.expand svg { display: block; width: 40px; height: 16px; }
.tree { display: flex; flex: 1; min-height: 0; margin: 0 0 2px 1px; padding: 1px; overflow: hidden; border: 1px solid #828790; background: #fff; }
.tree ul { flex: 1; overflow: hidden; }
.tree li { display: flex; align-items: center; height: 16px; white-space: nowrap; }
.tree tt { display: inline-block; }
.leaf { gap: 2px; padding-left: 43px;
  background:
    repeating-linear-gradient(#999 0 1px, transparent 1px 2px) 13px 0 / 1px 100% no-repeat,
    repeating-linear-gradient(#999 0 1px, transparent 1px 2px) 32px 0 / 1px 100% no-repeat,
    repeating-linear-gradient(90deg, #999 0 1px, transparent 1px 2px) 33px 8px / 10px 1px no-repeat; }
.leaf.last { background-size: 1px 100%, 1px 8px, 10px 1px; }
.leaf span { padding: 0 5px 0 2px; }
.leaf.sel span { background: #d9d9d9; }
.dir { gap: 4px; padding-left: 8px;
  background: repeating-linear-gradient(90deg, #999 0 1px, transparent 1px 2px) 20px 8px / 4px 1px no-repeat; }
.chev { width: 6px; height: 6px; margin-right: 6px; border: solid #a0a0a0; border-width: 1px 1px 0 0; transform: rotate(45deg); }
.open .chev { border-color: #333; border-width: 2px 2px 0 0; transform: rotate(135deg); }
.scroll { display: flex; flex: 0 0 15px; flex-direction: column; align-items: center; justify-content: space-between; margin-right: 1px; padding: 6px 0; background: #f0f0f0; }
.scroll svg { width: 8px; height: 6px; fill: none; stroke: #444; stroke-width: 2; }
.thumb { width: 100%; height: 265px; margin-bottom: auto; margin-top: 14px; background: #cdcdcd; }

.stage { display: flex; flex-direction: column; min-width: 0; min-height: 0; }
.row { display: flex; flex: none; padding: 1px 0 1px 1px; }
.row .strip { padding: 0 5px 0 3px; }
.r-edit { height: 29px; }
.r-comp { height: 27px; }
.r-draw { height: 30px; }
.r-snap { height: 31px; justify-content: flex-start; padding-left: 212px; }
.row .grip + .tool { margin-left: -2px; }
.s-axis { margin-left: 74px; }
.combo { position: relative; display: flex; flex: 0 0 66px; align-items: center; height: 24px; margin-right: -1px; background: #fff; }
.combo.floor { flex-basis: 58px; margin: 0 -4px 0 -3px; }
.combo select { width: 100%; padding: 0 16px 0 2px; appearance: none; outline: 0; }
.combo::after { content: ""; position: absolute; right: 0; width: 9px; height: 3px; background: #000; clip-path: polygon(2px 0, 7px 0, 4.5px 3px); }
.combo.shift { flex-basis: 56px; margin: 0 -3px 0 -3px; }
.r-comp .on, .r-draw .on { margin: 0 -4px; padding: 0 3px 0 4px; }
.r-comp .on { margin: 0 -3px; }
.s-select { flex: 0 0 427px; }
.row .s-select .on { margin: 0 -2px 0 -5px; }
.row .s-smart { padding-left: 0; }
.s-empty { width: 28px; margin-left: 4px; }

.canvas { display: block; flex: 1 1 0; min-height: 0; width: calc(100% - 1px); background: #000; }
.axis-name { fill: #ccc; font: 14px "DejaVu Sans Mono", monospace; text-anchor: middle; }

.pair { display: flex; margin: 0 -4px; }
.pair .tool { padding: 0 3px 0 4px; }
.s-offset { margin-left: 3px; color: #6d6d6d; }
.s-offset select, .rotate { color: #000; }
.row .s-offset { gap: 5px; }
.num { display: inline-flex; align-items: center; gap: 2px; }
.spin { position: relative; display: flex; width: 58px; height: 23px; border: 1px solid #7a7a7a; background: #f0f0f0; }
.spin.wide { width: 68px; }
.spin input { width: 100%; min-width: 0; padding-right: 18px; text-align: right; outline: 0; }
.spin::before, .spin::after { content: ""; position: absolute; right: 4px; width: 5px; height: 3px; background: #555; clip-path: polygon(0 0, 100% 0, 50% 100%); }
.spin::before { top: 3px; clip-path: polygon(0 100%, 100% 100%, 50% 0); }
.spin::after { bottom: 3px; }
.rotate { display: inline-flex; align-items: center; gap: 8px; }
.tick { display: block; width: 13px; height: 13px; appearance: none; border: 1px solid #333; background: #fff; }
.rotate .tick { width: 11px; height: 11px; border-color: #aaa; background: #f0f0f0; }

.dialog { position: absolute; left: 355px; top: 46px; width: 331px; height: 495px; border: 1px solid #999; border-top-color: #3f8ede; background: #fff; box-shadow: 0 2px 8px rgba(0, 0, 0, .3); }
.dialog header { display: flex; align-items: center; height: 31px; padding: 2px 1px 0 7px; border-bottom: 1px solid #aaa; }
.dialog h2 { flex: 1; }
.dialog header button { display: grid; place-items: center; width: 18px; height: 19px; background: #c75050; }
.dialog header svg { width: 8px; height: 8px; stroke: #fff; stroke-width: 1.5; }
.dialog table { width: 327px; margin-left: 1px; border-collapse: separate; border-spacing: 0; table-layout: fixed; }
.c-no { width: 21px; } .c-name { width: 121px; } .c-val { width: 154px; } .c-add { width: 31px; }
.dialog td, .dialog th { height: 19px; padding: 0 0 0 2px; overflow: hidden; border: solid #bdbdbd; border-width: 0 1px 1px 0; font-weight: 400; line-height: 16px; white-space: nowrap; }
.dialog th { padding: 0; background: linear-gradient(#fdfdfd, #f0f0f0); text-align: center; }
.dialog thead th { height: 24px; }
.dialog thead .hot { background: linear-gradient(#fad796, #f0c069); color: #6a0050; }
.dialog td .tick { margin: 0 auto; }
.dialog td:last-child { padding: 0; }
.dialog .k { padding-left: 20px; }
.dialog .link { color: #00f; }
.dialog .group { padding-left: 2px; color: #888; }
.fold { display: inline-block; width: 13px; height: 13px; margin-right: 5px; vertical-align: middle; border: 1px solid #bbb;
  background: linear-gradient(#000, #000) center / 7px 1px no-repeat; }
.fold.plus { background: linear-gradient(#000, #000) center / 7px 1px no-repeat, linear-gradient(#000, #000) center / 1px 7px no-repeat; }
.dialog .sub { padding-left: 29px; background: linear-gradient(#bbb, #bbb) 8px 0 / 1px 100% no-repeat, linear-gradient(#bbb, #bbb) 8px 9px / 17px 1px no-repeat; }
.dialog .sub.end { background-size: 1px 9px, 17px 1px; }
.dialog .cur th { background: #ffd58c; color: #6a0050; }
.dialog .cur td:nth-child(3) { background: #d9e9f8; }
.dialog .cur .sub { background-color: #0078d7; color: #fff; }
.marks { position: absolute; left: 0; top: 0; width: 100%; height: 100%; pointer-events: none; }
.marks ellipse { fill: none; stroke: #f00; stroke-width: 7; }

.status { display: flex; flex: 0 0 22px; gap: 2px; padding: 2px 0 1px; background: #fff; line-height: 17px; white-space: nowrap; }
.status span { padding-left: 1px; border: 1px solid #d8d8d8; background: #f6f6f6; }
.w-xy { flex: 0 0 148px; } .w-h { flex: 0 0 78px; } .w-b { flex: 0 0 98px; } .w-n { flex: 0 0 48px; } .w-msg { flex: 1; } .w-fps { flex: 0 0 70px; }

.taskbar { display: flex; flex: 0 0 40px; align-items: center; background: #020c10; color: #eee; }
.taskbar button { display: grid; place-items: center; height: 40px; }
.start { flex: 0 0 48px; background: #000; }
.search { display: flex; flex: 0 1 344px; align-items: center; height: 40px; padding: 0 14px 0 9px; gap: 5px; background: #333; }
.search input { flex: 1; min-width: 0; font-size: 14px; outline: 0; }
.search input::placeholder { color: #999; opacity: 1; }
.apps { display: flex; align-items: center; }
.apps button { width: 48px; }
.apps .big { width: 51px; }
.apps .mid { width: 38px; }
.apps .run { box-shadow: inset 5px 0 #020c10, inset -5px 0 #020c10, inset 0 -2px #76b9ed; }
.apps .active { background: #343c41; box-shadow: inset 0 -2px #76b9ed; }
.tsep { width: 4px; height: 16px; border: solid #40474a; border-width: 0 1px; }
.apps .tsep { margin: 0 12px 0 7px; }
.taskbar > .tsep { margin-left: 14px; }
.links { margin: 0 19px 0 11px; }
.stack { display: flex; flex-direction: column; align-items: center; gap: 2px; line-height: 16px; }
.tray { display: flex; align-items: center; gap: 9px; margin-left: 19px; }
.tray svg { fill: none; stroke: #fff; }
.tray .sg { stroke: none; }
.clock { margin-left: 19px; }
.notice { margin: 0 auto; }
.notice text { fill: #fff; font: 700 13px "Noto Sans", sans-serif; }

.ime { position: absolute; left: 807px; top: 3px; display: flex; align-items: center; justify-content: space-between; width: 192px; height: 23px; padding: 0 4px 0 17px; border: 1px solid #a9bfd8; background: #fff; color: #1b76c8; }
.ime b { font-size: 16px; }
.ime .sbig { position: absolute; left: -15px; top: -4px; }
.ball { position: absolute; left: 1013px; top: -27px; display: flex; align-items: flex-end; justify-content: center; width: 46px; height: 46px; padding-bottom: 3px; border: 2px solid #f4f4f4; border-radius: 50%; background: #43c35b; box-shadow: 0 1px 3px #666, inset 0 0 0 1px #2c9b45; color: #fff; font-weight: 700; font-size: 12px; line-height: 14px; }
```
